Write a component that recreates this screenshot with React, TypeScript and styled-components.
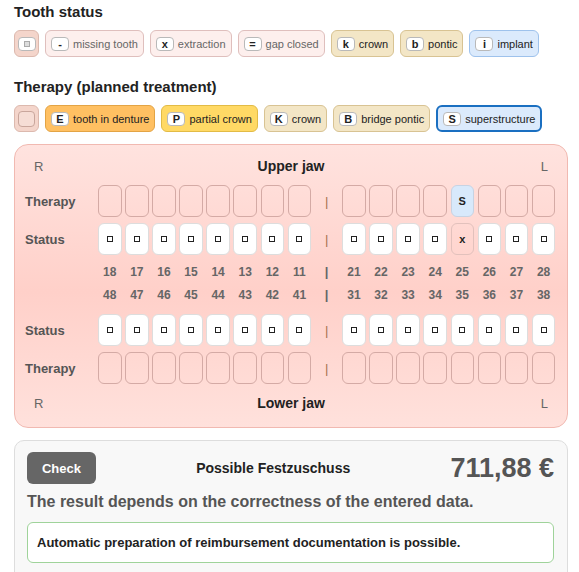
import React from 'react';
import styled, { createGlobalStyle } from 'styled-components';

type ChipTone = 'blank' | 'muted' | 'sand' | 'blue' | 'orange' | 'yellow';

type Chip = {
  key?: string;
  label?: string;
  tone: ChipTone;
  active?: boolean;
  icon?: 'dot' | 'empty';
};

const statusChips: Chip[] = [
  { tone: 'blank', icon: 'dot' },
  { key: '-', label: 'missing tooth', tone: 'muted' },
  { key: 'x', label: 'extraction', tone: 'muted' },
  { key: '=', label: 'gap closed', tone: 'muted' },
  { key: 'k', label: 'crown', tone: 'sand' },
  { key: 'b', label: 'pontic', tone: 'sand' },
  { key: 'i', label: 'implant', tone: 'blue' },
];

const therapyChips: Chip[] = [
  { tone: 'blank', icon: 'empty' },
  { key: 'E', label: 'tooth in denture', tone: 'orange' },
  { key: 'P', label: 'partial crown', tone: 'yellow' },
  { key: 'K', label: 'crown', tone: 'sand' },
  { key: 'B', label: 'bridge pontic', tone: 'sand' },
  { key: 'S', label: 'superstructure', tone: 'blue', active: true },
];

const upperRight = [18, 17, 16, 15, 14, 13, 12, 11];
const upperLeft = [21, 22, 23, 24, 25, 26, 27, 28];
const lowerRight = [48, 47, 46, 45, 44, 43, 42, 41];
const lowerLeft = [31, 32, 33, 34, 35, 36, 37, 38];

// findings per tooth number
const statusOf: Record<number, string> = { 25: 'x' };
const therapyOf: Record<number, string> = { 25: 'S' };

const tones: Record<ChipTone, { bg: string; border: string; color: string }> = {
  blank: { bg: '#f4d5cb', border: '#dcb9ae', color: '#333' },
  muted: { bg: '#fdefed', border: '#dfbfbd', color: '#666' },
  sand: { bg: '#f3e6c6', border: '#d8c393', color: '#222' },
  blue: { bg: '#dbeafc', border: '#9ec2ec', color: '#222' },
  orange: { bg: '#ffc062', border: '#e3a445', color: '#222' },
  yellow: { bg: '#ffd965', border: '#e2bb46', color: '#222' },
};

const GlobalStyle = createGlobalStyle`
  body {
    margin: 0;
    background: #fff;
    font-family: "Liberation Sans", Arial, sans-serif;
    color: #222;
  }
`;

const ChipButton = ({ chip }: { chip: Chip }) => (
  <ChipBox $tone={chip.tone} $active={chip.active} $square={!chip.label}>
    {chip.icon === 'empty' ? (
      <EmptySlot />
    ) : (
      <KeyCap>{chip.icon === 'dot' ? <GreyDot /> : chip.key}</KeyCap>
    )}
    {chip.label && <ChipLabel>{chip.label}</ChipLabel>}
  </ChipBox>
);

const ToothRow = ({ teeth, kind }: { teeth: number[]; kind: 'status' | 'therapy' }) => (
  <ToothGroup>
    {teeth.map((n) => {
      const mark = kind === 'status' ? statusOf[n] : therapyOf[n];
      if (kind === 'status') {
        return (
          <StatusCell key={n} $marked={!!mark}>
            {mark ?? <SoundMark />}
          </StatusCell>
        );
      }
      return (
        <TherapyCell key={n} $marked={!!mark}>
          {mark}
        </TherapyCell>
      );
    })}
  </ToothGroup>
);

const JawRow = ({
  label,
  kind,
  right,
  left,
}: {
  label: string;
  kind: 'status' | 'therapy';
  right: number[];
  left: number[];
}) => (
  <Row>
    <RowLabel>{label}</RowLabel>
    <ToothRow teeth={right} kind={kind} />
    <Divider>|</Divider>
    <ToothRow teeth={left} kind={kind} />
  </Row>
);

const NumberRow = ({ right, left }: { right: number[]; left: number[] }) => (
  <NumRow>
    <RowLabel />
    <ToothGroup>
      {right.map((n) => (
        <NumCell key={n}>{n}</NumCell>
      ))}
    </ToothGroup>
    <NumDivider>|</NumDivider>
    <ToothGroup>
      {left.map((n) => (
        <NumCell key={n}>{n}</NumCell>
      ))}
    </ToothGroup>
  </NumRow>
);

const App = () => {
  return (
    <Page>
      <GlobalStyle />
      <Heading>Tooth status</Heading>
      <ChipBar>
        {statusChips.map((c, i) => (
          <ChipButton key={i} chip={c} />
        ))}
      </ChipBar>

      <Heading $spaced>Therapy (planned treatment)</Heading>
      <ChipBar>
        {therapyChips.map((c, i) => (
          <ChipButton key={i} chip={c} />
        ))}
      </ChipBar>

      <JawPanel>
        <JawHeader>
          <Side>R</Side>
          <JawTitle>Upper jaw</JawTitle>
          <Side $right>L</Side>
        </JawHeader>
        <Rows>
          <JawRow label="Therapy" kind="therapy" right={upperRight} left={upperLeft} />
          <JawRow label="Status" kind="status" right={upperRight} left={upperLeft} />
        </Rows>
        <Numbers>
          <NumberRow right={upperRight} left={upperLeft} />
          <NumberRow right={lowerRight} left={lowerLeft} />
        </Numbers>
        <Rows>
          <JawRow label="Status" kind="status" right={lowerRight} left={lowerLeft} />
          <JawRow label="Therapy" kind="therapy" right={lowerRight} left={lowerLeft} />
        </Rows>
        <JawHeader $bottom>
          <Side>R</Side>
          <JawTitle>Lower jaw</JawTitle>
          <Side $right>L</Side>
        </JawHeader>
      </JawPanel>

      <ResultCard>
        <ResultTop>
          <CheckButton>Check</CheckButton>
          <SubsidyLabel>Possible Festzuschuss</SubsidyLabel>
          <Amount>711,88 €</Amount>
        </ResultTop>
        <Disclaimer>The result depends on the correctness of the entered data.</Disclaimer>
        <Notice>Automatic preparation of reimbursement documentation is possible.</Notice>
      </ResultCard>
    </Page>
  );
};

export default App;

const Page = styled.div`
  padding: 2px 11px 0 14px;
  height: 572px;
  box-sizing: border-box;
  overflow: hidden;
`;

const Heading = styled.h2<{ $spaced?: boolean }>`
  margin: ${({ $spaced }) => ($spaced ? '20px' : '0')} 0 9px;
  font-size: 15px;
  line-height: 19px;
  font-weight: bold;
  color: #222;
`;

const ChipBar = styled.div`
  display: flex;
  gap: 6px;
`;

const ChipBox = styled.div<{ $tone: ChipTone; $active?: boolean; $square?: boolean }>`
  box-sizing: border-box;
  flex: none;
  height: 27px;
  display: inline-flex;
  align-items: center;
  justify-content: center;
  gap: 4px;
  padding: ${({ $square }) => ($square ? '0' : '0 5px')};
  width: ${({ $square }) => ($square ? '25px' : 'auto')};
  border-radius: 6px;
  background: ${({ $tone }) => tones[$tone].bg};
  border: ${({ $active, $tone }) => ($active ? '2px solid #1a6fc1' : `1px solid ${tones[$tone].border}`)};
  color: ${({ $tone }) => tones[$tone].color};
`;

const KeyCap = styled.span`
  box-sizing: border-box;
  width: 18px;
  height: 14px;
  display: inline-flex;
  align-items: center;
  justify-content: center;
  background: #fff;
  border: 1px solid #b9b9b9;
  border-radius: 4px;
  font-size: 11px;
  font-weight: bold;
  color: #222;
`;

const GreyDot = styled.span`
  width: 4px;
  height: 4px;
  border: 1px solid #aaa;
  background: #ddd;
`;

const EmptySlot = styled.span`
  box-sizing: border-box;
  width: 17px;
  height: 16px;
  border: 1px solid #c9a69c;
  border-radius: 4px;
  background: #f6ddd5;
`;

const ChipLabel = styled.span`
  font-size: 11px;
  white-space: nowrap;
`;

const JawPanel = styled.div`
  margin-top: 12px;
  box-sizing: border-box;
  height: 284px;
  padding: 12px 10px 0;
  border: 1px solid #f1b9b1;
  border-radius: 14px;
  background: linear-gradient(180deg, #ffe3df 0%, #ffd0c9 52%, #ffe1dc 100%);
`;

const JawHeader = styled.div<{ $bottom?: boolean }>`
  display: grid;
  grid-template-columns: 1fr auto 1fr;
  align-items: center;
  height: 18px;
  padding: 0 9px;
  margin-top: ${({ $bottom }) => ($bottom ? '10px' : '0')};
  margin-bottom: ${({ $bottom }) => ($bottom ? '0' : '10px')};
`;

const Side = styled.span<{ $right?: boolean }>`
  font-size: 13px;
  color: #666;
  justify-self: ${({ $right }) => ($right ? 'end' : 'start')};
`;

const JawTitle = styled.span`
  font-size: 14px;
  font-weight: bold;
  color: #222;
`;

const Rows = styled.div`
  display: flex;
  flex-direction: column;
  gap: 6px;
`;

const Row = styled.div`
  display: flex;
  align-items: center;
  height: 32px;
`;

const RowLabel = styled.span`
  width: 73px;
  flex: none;
  font-size: 13px;
  font-weight: bold;
  color: #555;
`;

const ToothGroup = styled.div`
  display: flex;
  gap: 3.6px;
`;

const Divider = styled.span`
  width: 31px;
  flex: none;
  text-align: center;
  font-size: 13px;
  color: #a9724f;
`;

const Cell = styled.div`
  box-sizing: border-box;
  width: 23.5px;
  height: 32px;
  display: flex;
  align-items: center;
  justify-content: center;
  border-radius: 6px;
  font-size: 11px;
  font-weight: bold;
  color: #222;
`;

const TherapyCell = styled(Cell)<{ $marked: boolean }>`
  border: 1px solid ${({ $marked }) => ($marked ? '#c7d3e3' : '#d4aaa5')};
  background: ${({ $marked }) => ($marked ? '#d8e9fb' : 'transparent')};
`;

const StatusCell = styled(Cell)<{ $marked: boolean }>`
  border: 1px solid ${({ $marked }) => ($marked ? '#e2c1bc' : '#ddd')};
  background: ${({ $marked }) => ($marked ? 'transparent' : '#fff')};
`;

const SoundMark = styled.span`
  box-sizing: border-box;
  width: 6px;
  height: 6px;
  border: 1px solid #222;
`;

const Numbers = styled.div`
  margin: 5px 0 8px;
`;

const NumRow = styled.div`
  display: flex;
  align-items: center;
  height: 23px;
`;

const NumCell = styled.span`
  width: 23.5px;
  text-align: center;
  font-size: 12px;
  font-weight: bold;
  color: #666;
`;

const NumDivider = styled(Divider)`
  font-weight: bold;
  color: #666;
`;

const ResultCard = styled.div`
  margin-top: 12px;
  padding: 11px 13px 20px 12px;
  border: 1px solid #ddd;
  border-radius: 10px;
  background: #f8f8f8;
`;

const ResultTop = styled.div`
  display: flex;
  align-items: center;
`;

const CheckButton = styled.button`
  width: 69px;
  height: 32px;
  border: none;
  border-radius: 6px;
  background: #666;
  color: #fff;
  font-family: inherit;
  font-size: 13px;
  font-weight: bold;
`;

const SubsidyLabel = styled.span`
  flex: 1;
  text-align: center;
  font-size: 14px;
  font-weight: bold;
  color: #222;
`;

const Amount = styled.span`
  font-size: 27px;
  font-weight: bold;
  color: #555;
`;

const Disclaimer = styled.p`
  margin: 8px 0 10px;
  font-size: 16px;
  line-height: 20px;
  font-weight: bold;
  color: #555;
`;

const Notice = styled.div`
  box-sizing: border-box;
  height: 41px;
  display: flex;
  align-items: center;
  padding: 0 9px;
  border: 1px solid #9fd39a;
  border-radius: 6px;
  background: #fff;
  font-size: 13px;
  font-weight: bold;
  color: #222;
`;
